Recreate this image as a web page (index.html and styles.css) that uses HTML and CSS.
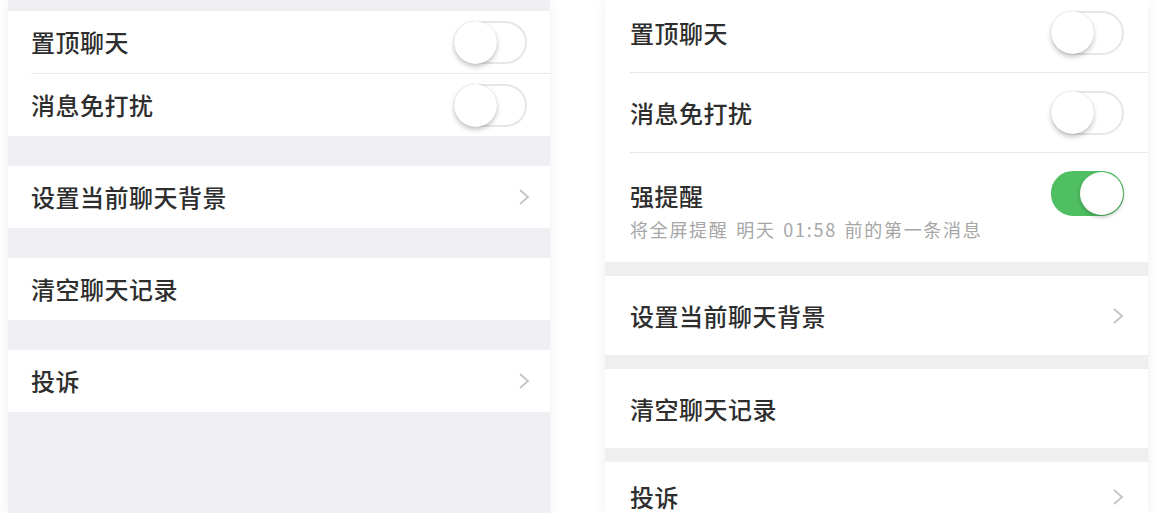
FILE: index.html
```html
<!DOCTYPE html>
<html lang="zh-CN">
<head>
    <meta charset="UTF-8">
    <meta name="viewport" content="width=device-width, initial-scale=1.0">
    <title>聊天信息</title>
    <link rel="stylesheet" href="styles.css">
</head>
<body>

    <div class="screens">

        <!-- old version -->
        <div class="screen screen-old">
            <div class="group">
                <div class="cell">
                    <div class="cell-body">
                        <span class="cell-title">置顶聊天</span>
                        <span class="switch"></span>
                    </div>
                </div>
                <div class="cell">
                    <div class="cell-body">
                        <span class="cell-title">消息免打扰</span>
                        <span class="switch"></span>
                    </div>
                </div>
            </div>

            <div class="group">
                <div class="cell">
                    <div class="cell-body">
                        <span class="cell-title">设置当前聊天背景</span>
                        <svg class="arrow" viewBox="0 0 12 18"><polyline points="2,2 10,9 2,16"/></svg>
                    </div>
                </div>
            </div>

            <div class="group">
                <div class="cell">
                    <div class="cell-body">
                        <span class="cell-title">清空聊天记录</span>
                    </div>
                </div>
            </div>

            <div class="group">
                <div class="cell">
                    <div class="cell-body">
                        <span class="cell-title">投诉</span>
                        <svg class="arrow" viewBox="0 0 12 18"><polyline points="2,2 10,9 2,16"/></svg>
                    </div>
                </div>
            </div>
        </div>

        <!-- new version -->
        <div class="screen screen-new">
            <div class="group">
                <div class="cell">
                    <div class="cell-body">
                        <span class="cell-title">置顶聊天</span>
                        <span class="switch"></span>
                    </div>
                </div>
                <div class="cell">
                    <div class="cell-body">
                        <span class="cell-title">消息免打扰</span>
                        <span class="switch"></span>
                    </div>
                </div>
                <div class="cell cell-tall">
                    <div class="cell-body">
                        <div class="cell-main">
                            <div class="cell-head">
                                <span class="cell-title">强提醒</span>
                                <span class="switch on"></span>
                            </div>
                            <div class="cell-desc">将全屏提醒 明天 01:58 前的第一条消息</div>
                        </div>
                    </div>
                </div>
            </div>

            <div class="group">
                <div class="cell">
                    <div class="cell-body">
                        <span class="cell-title">设置当前聊天背景</span>
                        <svg class="arrow" viewBox="0 0 12 18"><polyline points="2,2 10,9 2,16"/></svg>
                    </div>
                </div>
            </div>

            <div class="group">
                <div class="cell">
                    <div class="cell-body">
                        <span class="cell-title">清空聊天记录</span>
                    </div>
                </div>
            </div>

            <div class="group group-cut">
                <div class="cell">
                    <div class="cell-body">
                        <span class="cell-title">投诉</span>
                        <svg class="arrow" viewBox="0 0 12 18"><polyline points="2,2 10,9 2,16"/></svg>
                    </div>
                </div>
            </div>
        </div>

    </div>

</body>
</html>
```

FILE: styles.css
```css
* {
    box-sizing: border-box;
    margin: 0;
    padding: 0;
}

body {
    background: #fff;
    font-family: "Noto Sans CJK SC", "Noto Sans", sans-serif;
    color: #2e2e2e;
    overflow: hidden;
}

.screens {
    display: flex;
    gap: 55px;
    padding-left: 8px;
}

.screen {
    height: 513px;
    overflow: hidden;
    box-shadow: 0 2px 12px rgba(0, 0, 0, 0.07);
}

.screen-old {
    width: 542px;
    background: #efeff4;
    padding-top: 11px;
}

.screen-new {
    width: 543px;
    background: #efefef;
}

.group {
    background: #fff;
    margin-bottom: 30px;
}

.screen-new .group {
    margin-bottom: 14px;
}

.screen-new .group:first-child {
    margin-top: -7px;
}

.cell {
    padding-left: 23px;
}

.screen-new .cell {
    padding-left: 25px;
}

.cell-body {
    display: flex;
    align-items: center;
    justify-content: space-between;
    height: 63px;
    padding-right: 23px;
    border-bottom: 1px solid #e8e8e8;
}

.screen-new .cell-body {
    height: 80px;
    padding-right: 24px;
}

.cell:last-child .cell-body {
    border-bottom: none;
    height: 62px;
}

.screen-new .cell:last-child .cell-body {
    height: 79px;
}

.screen-new .cell-tall .cell-body,
.screen-new .cell-tall:last-child .cell-body {
    height: 109px;
    align-items: flex-start;
    padding-top: 18px;
}

/* last row of the right screen runs off the bottom */
.screen-new .group-cut .cell:last-child .cell-body {
    height: 51px;
    align-items: flex-end;
    padding-bottom: 4px;
}

.cell-title {
    font-size: 24px;
    font-weight: 500;
    line-height: 30px;
    letter-spacing: 0.5px;
}

.group-cut .cell-title {
    line-height: 24px;
}

.cell-main {
    flex: 1;
}

.cell-head {
    display: flex;
    align-items: center;
    justify-content: space-between;
}

.cell-head .cell-title {
    padding-top: 5px;
}

.cell-desc {
    font-size: 18px;
    line-height: 22px;
    color: #a6a6a6;
    margin-top: 2px;
    letter-spacing: 1.7px;
    word-spacing: 2px;
}

/* iOS style switch */
.switch {
    position: relative;
    width: 73px;
    height: 43px;
    border-radius: 22px;
    border: 2px solid #e6e6e6;
    background: #fff;
    flex-shrink: 0;
}

.switch::after {
    content: "";
    position: absolute;
    left: -2px;
    top: -2px;
    width: 43px;
    height: 43px;
    border-radius: 50%;
    background: #fff;
    box-shadow: 0 3px 5px rgba(0, 0, 0, 0.22), 0 0 1px rgba(0, 0, 0, 0.2);
}

.screen-new .switch {
    height: 44px;
}

.switch.on {
    background: #4fbf62;
    border-color: #4fbf62;
    height: 45px;
}

.switch.on::after {
    left: auto;
    right: -1px;
    top: -1px;
    width: 43px;
    height: 43px;
    box-shadow: 0 2px 4px rgba(0, 0, 0, 0.25);
}

.arrow {
    width: 12px;
    height: 18px;
    fill: none;
    stroke: #c4c4c8;
    stroke-width: 1.8;
    margin-right: -3px;
}

.screen-new .arrow {
    margin-right: 0;
}

.group-cut .arrow {
    margin-bottom: 3px;
}
```
